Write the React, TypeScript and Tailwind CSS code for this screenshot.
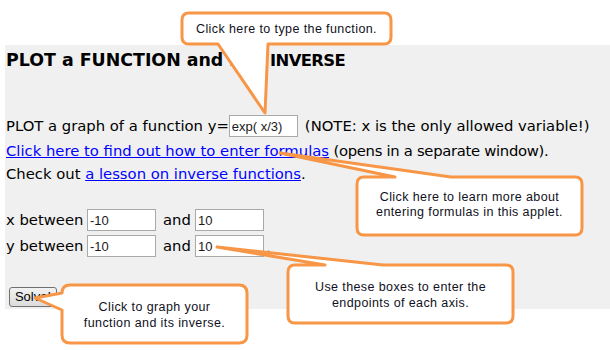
import React from 'react'

const ORANGE = '#f79646'

// callout outlines, in page coordinates
const callouts = [
  // type the function
  'M189,13 H384 Q391,13 391,20 V37 Q391,44 384,44 H268 L265,113 L218,44 H189 Q182,44 182,37 V20 Q182,13 189,13 Z',
  // learn more about formulas
  'M364,177 H395 L280,153 L451,177 H575 Q582,177 582,184 V228 Q582,235 575,235 H364 Q357,235 357,228 V184 Q357,177 364,177 Z',
  // endpoints of each axis
  'M295,265 H325 L217,247 L383,265 H506 Q513,265 513,272 V316 Q513,323 506,323 H295 Q288,323 288,316 V272 Q288,265 295,265 Z',
  // graph button
  'M70,285 H239 Q247,285 247,293 V335 Q247,343 239,343 H70 Q62,343 62,335 V310 L35,298 L62,293 Q62,285 70,285 Z',
]

function Field({ value, w = 'w-[69px]' }: { value: string; w?: string }) {
  return (
    <input
      type="text"
      defaultValue={value}
      className={`${w} h-[22px] bg-white border border-[#a9a9a9] px-[2px] text-[13px] text-[#1a1a1a] outline-none font-['Liberation_Sans',Arial,sans-serif]`}
    />
  )
}

export default function App() {
  return (
    <div className="relative w-[610px] h-[350px] bg-white overflow-hidden font-['DejaVu_Sans','Comic_Sans_MS',sans-serif] text-black">
      <div className="mt-[45px] ml-[5px] h-[264px] bg-[#f0f0f0] pl-[1px] pt-[2px]">
        <h3 className="h-[26px] leading-[26px] text-[17.4px] font-bold whitespace-nowrap">
          PLOT a FUNCTION and its <span className="ml-[10px] text-[16.4px] tracking-[-0.6px]">INVERSE</span>
        </h3>

        <div className="mt-[40px] text-[14.8px]">
          <div className="h-[26px] flex items-center">
            <span>PLOT a graph of a function y=</span>
            <Field value="exp( x/3)" />
            <span className="ml-[7px]">(NOTE: x is the only allowed variable!)</span>
          </div>
          <div className="h-[24px] flex items-center">
            <a href="#" className="text-[#0000ff] underline">Click here to find out how to enter formulas</a>
            <span className="tracking-[-0.3px]">&nbsp;(opens in a separate window).</span>
          </div>
          <div className="h-[22px] flex items-center">
            <span>Check out&nbsp;</span>
            <a href="#" className="text-[#0000ff] underline">a lesson on inverse functions</a>
            <span>.</span>
          </div>

          <div className="mt-[23px] h-[24px] flex items-center">
            <span className="w-[81px]">x between</span>
            <Field value="-10" />
            <span className="w-[39px] pl-[7px]">and</span>
            <Field value="10" />
          </div>
          <div className="mt-[2px] h-[24px] flex items-center">
            <span className="w-[81px]">y between</span>
            <Field value="-10" />
            <span className="w-[39px] pl-[7px]">and</span>
            <Field value="10" />
            <span className="self-end text-[10px] leading-[10px] ml-[3px] mb-[4px]">.</span>
          </div>

          <button className="mt-[29px] ml-[3px] w-[48px] h-[20px] rounded-[3px] border border-[#707070] bg-gradient-to-b from-[#f2f2f2] to-[#dcdcdc] text-[13px] leading-[18px] font-['Liberation_Sans',Arial,sans-serif]">
            Solve!
          </button>
        </div>
      </div>

      {/* callouts lie over the form */}
      <svg className="absolute left-0 top-0 pointer-events-none" width="610" height="350" viewBox="0 0 610 350">
        {callouts.map((d, i) => (
          <path key={i} d={d} fill="white" stroke={ORANGE} strokeWidth="3" strokeLinejoin="round" />
        ))}
      </svg>

      <div className="absolute inset-0 pointer-events-none font-['Liberation_Sans',Arial,sans-serif] text-[12.5px] tracking-[0.4px] text-[#111122] text-center leading-[16px]">
        <div className="absolute left-[182px] top-[21px] w-[209px]">Click here to type the function.</div>
        <div className="absolute left-[357px] top-[190px] w-[225px] leading-[15px]">
          Click here to learn more about<br />entering formulas in this applet.
        </div>
        <div className="absolute left-[288px] top-[279px] w-[225px]">
          Use these boxes to enter the<br />endpoints of each axis.
        </div>
        <div className="absolute left-[62px] top-[299px] w-[185px]">
          Click to graph your<br />function and its inverse.
        </div>
      </div>
    </div>
  )
}
